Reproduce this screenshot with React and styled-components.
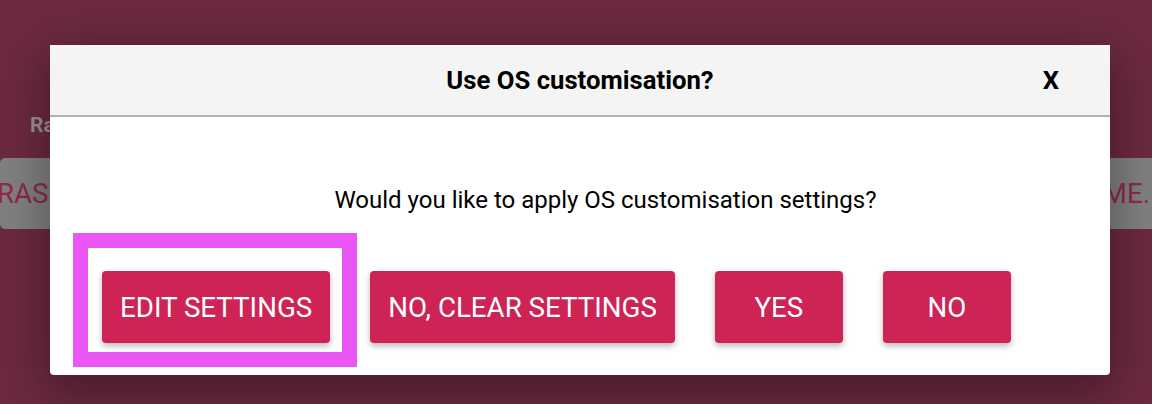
import React from 'react'
import styled, { createGlobalStyle } from 'styled-components';

const GlobalStyle = createGlobalStyle`
  html, body {
    margin: 0;
    padding: 0;
    width: 1152px;
    height: 404px;
    overflow: hidden;
    font-family: Roboto, "Liberation Sans", sans-serif;
  }
`

const App = () => {
  // dialog buttons, first one carries the highlight frame
  const buttons = [
    { label: "Edit settings", highlight: true },
    { label: "No, clear settings" },
    { label: "Yes" },
    { label: "No" },
  ]

  return (
    <Page>
      <GlobalStyle />
      <Backdrop>
        <LeftGroup>
          <GroupLabel>Raspberry Pi Device</GroupLabel>
          <BackButton $first>Raspberry Pi 4</BackButton>
        </LeftGroup>
        <RightGroup>
          <GroupLabel>Storage</GroupLabel>
          <BackButton $last>Choose name.</BackButton>
        </RightGroup>
      </Backdrop>

      <Dialog>
        <Header>
          <span />
          <Title>Use OS customisation?</Title>
          <Close>X</Close>
        </Header>
        <Body>
          <Question>Would you like to apply OS customisation settings?</Question>
          <Actions>
            {buttons.map((b) => (
              <ActionButton key={b.label} $highlight={b.highlight}>
                {b.label}
              </ActionButton>
            ))}
          </Actions>
        </Body>
      </Dialog>
    </Page>
  )
}

const Page = styled.div`
  position: relative;
  width: 1152px;
  height: 404px;
  overflow: hidden;
  background: #6d2a40;
`

const Backdrop = styled.div`
  display: flex;
  align-items: flex-start;
  padding-top: 111px;
`

const LeftGroup = styled.div`
  display: flex;
  flex-direction: column;
  width: 320px;
`

const RightGroup = styled.div`
  display: flex;
  flex-direction: column;
  width: 400px;
  margin-left: auto;
  margin-right: -100px;
`

const GroupLabel = styled.div`
  padding-left: 30px;
  font-size: 21px;
  font-weight: 700;
  line-height: 28px;
  color: #9b9396;
  white-space: nowrap;
  margin-bottom: 19px;
`

const BackButton = styled.div`
  height: 71px;
  display: flex;
  align-items: center;
  justify-content: ${p => p.$last ? "flex-end" : "flex-start"};
  padding-right: ${p => p.$last ? "102px" : "0"};
  text-indent: ${p => p.$first ? "-3px" : "0"};
  border-radius: 5px;
  background: #828282;
  color: #8e2a4e;
  font-size: 27.7px;
  text-transform: uppercase;
  white-space: nowrap;
`

const Dialog = styled.div`
  position: absolute;
  left: 50px;
  top: 45px;
  width: 1060px;
  height: 330px;
  display: flex;
  flex-direction: column;
  background: #ffffff;
  border-radius: 0 0 4px 4px;
  box-shadow: 0 14px 50px 8px rgba(0, 0, 0, 0.32);
`

const Header = styled.div`
  height: 70px;
  display: grid;
  grid-template-columns: 1fr auto 1fr;
  align-items: center;
  background: #f4f4f4;
  border-bottom: 2px solid #b2b2b2;
  padding: 0 51px;
`

const Title = styled.div`
  font-size: 25.7px;
  font-weight: 700;
  color: #000;
`

const Close = styled.div`
  justify-self: end;
  font-size: 25.7px;
  font-weight: 700;
  color: #000;
`

const Body = styled.div`
  flex: 1;
  display: flex;
  flex-direction: column;
  padding-top: 69px;
`

const Question = styled.div`
  text-align: center;
  padding-left: 51px;
  font-size: 24px;
  line-height: 28px;
  color: #000;
`

const Actions = styled.div`
  display: flex;
  gap: 40px;
  padding-left: 52px;
  margin-top: 57px;
`

const ActionButton = styled.button`
  position: relative;
  height: 72px;
  min-width: 128px;
  padding: 0 18px;
  border: none;
  border-radius: 4px;
  background: #cd2355;
  color: #fff;
  font-family: Roboto, "Liberation Sans", sans-serif;
  font-size: 27.7px;
  text-transform: uppercase;
  white-space: nowrap;
  box-shadow: 0 3px 6px rgba(0, 0, 0, 0.28);

  &::after {
    content: "";
    display: ${p => p.$highlight ? "block" : "none"};
    position: absolute;
    left: -29px;
    right: -27px;
    top: -38px;
    bottom: -24px;
    border: 15px solid #ea55f5;
    pointer-events: none;
  }
`

export default App;
